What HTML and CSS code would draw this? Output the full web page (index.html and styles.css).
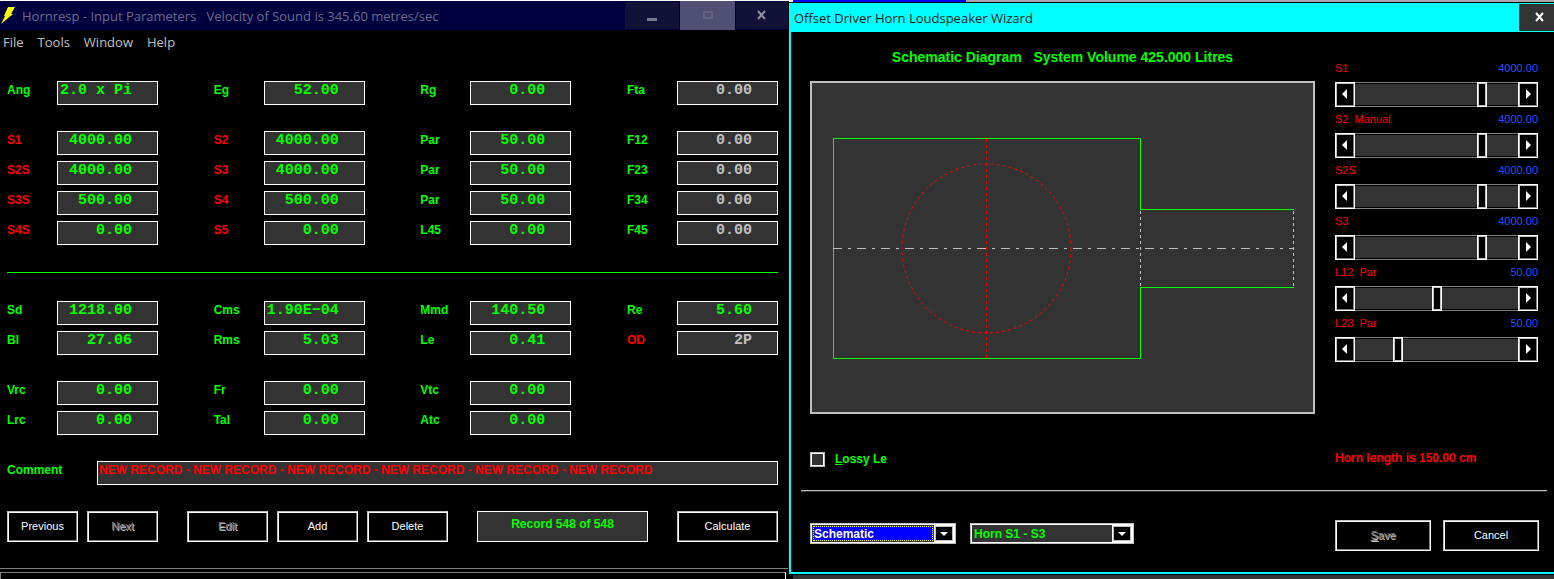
FILE: index.html
```
<!DOCTYPE html>
<html lang="en">
<head>
    <meta charset="UTF-8">
    <meta name="viewport" content="width=device-width, initial-scale=1.0">
    <title>Hornresp - Input Parameters</title>
    <link rel="stylesheet" href="styles.css">
</head>
<body>
    <div class="desktop">
        <!-- Main window -->
        <main class="main-window">
            <header class="titlebar">
                <svg class="bolt" width="14" height="18" viewBox="0 0 14 18"><path d="M7 0h7l-4 7h2L0 17l4-8H3z" fill="#ff0"/></svg>
                <h1 class="title">Hornresp - Input Parameters   Velocity of Sound is 345.60 metres/sec</h1>
                <button class="win-btn" type="button" aria-label="Minimize"><svg width="10" height="12"><path d="M0 8h10v3H0z" fill="#777790"/></svg></button>
                <button class="win-btn win-max" type="button" aria-label="Maximize"><svg width="10" height="10"><path d="M1 1h8v6H1z" fill="none" stroke="#62627e" stroke-width="2"/></svg></button>
                <button class="win-btn win-close" type="button" aria-label="Close"><svg width="10" height="10" viewBox="0 0 10 10"><path d="M1 1l7 8M8 1L1 9" stroke="#9090a0" stroke-width="2"/></svg></button>
            </header>
            <nav class="menu">
                <a href="#">File</a>
                <a href="#">Tools</a>
                <a href="#">Window</a>
                <a href="#">Help</a>
            </nav>

            <form class="params">
                <div class="fields">
                    <div class="field"><label for="ang">Ang</label><input class="left" id="ang" type="text" value="2.0 x Pi"></div>
                    <div class="field"><label for="eg">Eg</label><input id="eg" type="text" value="52.00"></div>
                    <div class="field"><label for="rg">Rg</label><input id="rg" type="text" value="0.00"></div>
                    <div class="field"><label for="fta">Fta</label><input class="grey" id="fta" type="text" value="0.00"></div>
                </div>

                <div class="fields">
                    <div class="field"><label class="red" for="s1">S1</label><input id="s1" type="text" value="4000.00"></div>
                    <div class="field"><label class="red" for="s2">S2</label><input id="s2" type="text" value="4000.00"></div>
                    <div class="field"><label for="par1">Par</label><input id="par1" type="text" value="50.00"></div>
                    <div class="field"><label for="f12">F12</label><input class="grey" id="f12" type="text" value="0.00"></div>

                    <div class="field"><label class="red" for="s2s">S2S</label><input id="s2s" type="text" value="4000.00"></div>
                    <div class="field"><label class="red" for="s3">S3</label><input id="s3" type="text" value="4000.00"></div>
                    <div class="field"><label for="par2">Par</label><input id="par2" type="text" value="50.00"></div>
                    <div class="field"><label for="f23">F23</label><input class="grey" id="f23" type="text" value="0.00"></div>

                    <div class="field"><label class="red" for="s3s">S3S</label><input id="s3s" type="text" value="500.00"></div>
                    <div class="field"><label class="red" for="s4">S4</label><input id="s4" type="text" value="500.00"></div>
                    <div class="field"><label for="par3">Par</label><input id="par3" type="text" value="50.00"></div>
                    <div class="field"><label for="f34">F34</label><input class="grey" id="f34" type="text" value="0.00"></div>

                    <div class="field"><label class="red" for="s4s">S4S</label><input id="s4s" type="text" value="0.00"></div>
                    <div class="field"><label class="red" for="s5">S5</label><input id="s5" type="text" value="0.00"></div>
                    <div class="field"><label for="l45">L45</label><input id="l45" type="text" value="0.00"></div>
                    <div class="field"><label for="f45">F45</label><input class="grey" id="f45" type="text" value="0.00"></div>
                </div>

                <hr class="green-line">

                <div class="fields">
                    <div class="field"><label for="sd">Sd</label><input id="sd" type="text" value="1218.00"></div>
                    <div class="field"><label for="cms">Cms</label><input id="cms" type="text" value="1.90E−04"></div>
                    <div class="field"><label for="mmd">Mmd</label><input id="mmd" type="text" value="140.50"></div>
                    <div class="field"><label for="re">Re</label><input id="re" type="text" value="5.60"></div>

                    <div class="field"><label for="bl">Bl</label><input id="bl" type="text" value="27.06"></div>
                    <div class="field"><label for="rms">Rms</label><input id="rms" type="text" value="5.03"></div>
                    <div class="field"><label for="le">Le</label><input id="le" type="text" value="0.41"></div>
                    <div class="field"><label class="red" for="od">OD</label><input class="grey" id="od" type="text" value="2P"></div>
                </div>

                <div class="fields">
                    <div class="field"><label for="vrc">Vrc</label><input id="vrc" type="text" value="0.00"></div>
                    <div class="field"><label for="fr">Fr</label><input id="fr" type="text" value="0.00"></div>
                    <div class="field"><label for="vtc">Vtc</label><input id="vtc" type="text" value="0.00"></div>
                    <span></span>
                    <div class="field"><label for="lrc">Lrc</label><input id="lrc" type="text" value="0.00"></div>
                    <div class="field"><label for="tal">Tal</label><input id="tal" type="text" value="0.00"></div>
                    <div class="field"><label for="atc">Atc</label><input id="atc" type="text" value="0.00"></div>
                </div>

                <div class="field comment">
                    <label for="comment">Comment</label>
                    <input id="comment" type="text" value="NEW RECORD - NEW RECORD - NEW RECORD - NEW RECORD - NEW RECORD - NEW RECORD">
                </div>

                <div class="actions">
                    <div class="btn-group">
                        <button class="btn small" type="button">Previous</button>
                        <button class="btn small" type="button" disabled>Next</button>
                    </div>
                    <div class="btn-group">
                        <button class="btn" type="button" disabled>Edit</button>
                        <button class="btn" type="button">Add</button>
                        <button class="btn" type="button">Delete</button>
                    </div>
                    <output class="record">Record 548 of 548</output>
                    <button class="btn large" type="button">Calculate</button>
                </div>
            </form>

            <footer class="statusbar"><div class="status-panel"></div></footer>
        </main>

        <!-- Loudspeaker wizard -->
        <div class="wizard-side">
            <section class="wizard">
                <header class="wizard-title">
                    <h2 class="title">Offset Driver Horn Loudspeaker Wizard</h2>
                    <button class="wizard-close" type="button" aria-label="Close"><svg width="10" height="10" viewBox="0 0 10 10"><path d="M1 1l7 8M8 1L1 9" stroke="#fff" stroke-width="2"/></svg></button>
                </header>

                <div class="wizard-body">
                    <div class="preview">
                        <h3 class="diagram-title">Schematic Diagram   System Volume 425.000 Litres</h3>
                        <div class="diagram">
                            <svg viewBox="0 0 501 329" fill="none">
                                <path d="M328.500 126.500V55.500H21.500V275.500H328.500V204.500" stroke="#0f0"/>
                                <path d="M328 126.500H482M328 204.500H482" stroke="#0f0"/>
                                <path d="M328.500 128V204M481.500 128V204" stroke="#c0c0c0" stroke-dasharray="3 3"/>
                                <path d="M21 165.500H482" stroke="#c0c0c0" stroke-dasharray="9 6 3 6"/>
                                <path d="M174.500 56V275" stroke="#f00" stroke-dasharray="3 3"/>
                                <circle cx="174.500" cy="165.500" r="84.500" stroke="#f00" stroke-dasharray="3 3"/>
                            </svg>
                        </div>
                        <div class="lossy">
                            <input id="lossy" type="checkbox">
                            <label for="lossy"><u>L</u>ossy Le</label>
                        </div>
                    </div>

                    <div class="sliders">
                        <div class="slider">
                            <div class="slider-head"><label for="r1">S1</label><output>4000.00</output></div>
                            <div class="scroll">
                                <button type="button" aria-label="Less"><svg width="6" height="10"><path d="M5 0v10L0 5z" fill="#fff"/></svg></button>
                                <input id="r1" type="range" value="80">
                                <button type="button" aria-label="More"><svg width="6" height="10"><path d="M1 0v10l5-5z" fill="#fff"/></svg></button>
                            </div>
                        </div>
                        <div class="slider">
                            <div class="slider-head"><label for="r2">S2  Manual</label><output>4000.00</output></div>
                            <div class="scroll">
                                <button type="button" aria-label="Less"><svg width="6" height="10"><path d="M5 0v10L0 5z" fill="#fff"/></svg></button>
                                <input id="r2" type="range" value="80">
                                <button type="button" aria-label="More"><svg width="6" height="10"><path d="M1 0v10l5-5z" fill="#fff"/></svg></button>
                            </div>
                        </div>
                        <div class="slider">
                            <div class="slider-head"><label for="r3">S2S</label><output>4000.00</output></div>
                            <div class="scroll">
                                <button type="button" aria-label="Less"><svg width="6" height="10"><path d="M5 0v10L0 5z" fill="#fff"/></svg></button>
                                <input id="r3" type="range" value="80">
                                <button type="button" aria-label="More"><svg width="6" height="10"><path d="M1 0v10l5-5z" fill="#fff"/></svg></button>
                            </div>
                        </div>
                        <div class="slider">
                            <div class="slider-head"><label for="r4">S3</label><output>4000.00</output></div>
                            <div class="scroll">
                                <button type="button" aria-label="Less"><svg width="6" height="10"><path d="M5 0v10L0 5z" fill="#fff"/></svg></button>
                                <input id="r4" type="range" value="80">
                                <button type="button" aria-label="More"><svg width="6" height="10"><path d="M1 0v10l5-5z" fill="#fff"/></svg></button>
                            </div>
                        </div>
                        <div class="slider">
                            <div class="slider-head"><label for="r5">L12  Par</label><output>50.00</output></div>
                            <div class="scroll">
                                <button type="button" aria-label="Less"><svg width="6" height="10"><path d="M5 0v10L0 5z" fill="#fff"/></svg></button>
                                <input id="r5" type="range" value="50">
                                <button type="button" aria-label="More"><svg width="6" height="10"><path d="M1 0v10l5-5z" fill="#fff"/></svg></button>
                            </div>
                        </div>
                        <div class="slider">
                            <div class="slider-head"><label for="r6">L23  Par</label><output>50.00</output></div>
                            <div class="scroll">
                                <button type="button" aria-label="Less"><svg width="6" height="10"><path d="M5 0v10L0 5z" fill="#fff"/></svg></button>
                                <input id="r6" type="range" value="25">
                                <button type="button" aria-label="More"><svg width="6" height="10"><path d="M1 0v10l5-5z" fill="#fff"/></svg></button>
                            </div>
                        </div>
                        <p class="length">Horn length is 150.00 cm</p>
                    </div>
                </div>

                <hr class="grey-line">

                <div class="wizard-footer">
                    <div class="combo active">
                        <select aria-label="View"><option>Schematic</option></select>
                        <span class="combo-arrow"><svg width="8" height="4"><path d="M0 0h8L4 4z" fill="#fff"/></svg></span>
                    </div>
                    <div class="combo wide">
                        <select aria-label="Segment"><option>Horn S1 - S3</option></select>
                        <span class="combo-arrow"><svg width="8" height="4"><path d="M0 0h8L4 4z" fill="#fff"/></svg></span>
                    </div>
                    <div class="dialog-btns">
                        <button class="btn medium" type="button" disabled><u>S</u>ave</button>
                        <button class="btn medium" type="button">Cancel</button>
                    </div>
                </div>
            </section>
            <div class="behind"></div>
        </div>
    </div>
</body>
</html>
```
FILE: styles.css
```
* {
    box-sizing: border-box;
}
body {
    margin: 0;
    background-color: #000;
    font-family: "Liberation Sans", Arial, sans-serif;
    font-size: 12px;
}
h1, h2, h3, p {
    margin: 0;
}
button {
    padding: 0;
    font-family: inherit;
}
svg {
    display: block;
}
.desktop {
    display: grid;
    grid-template-columns: 789fr 765fr;
    min-height: 100vh;
}

/* Main window */
.main-window {
    display: flex;
    flex-direction: column;
    border-top: 1px solid #fff;
}
.titlebar {
    display: flex;
    align-items: center;
    height: 29px;
    margin-right: 1px;
    padding-left: 1px;
    background-color: #000040;
    color: #6c6c8c;
}
.title {
    flex: 1;
    font: 13px/28px "Open Sans", "Noto Sans", sans-serif;
    white-space: pre;
}
.bolt {
    margin-right: 7px;
}
.win-btn {
    display: flex;
    align-items: center;
    justify-content: center;
    width: 54px;
    height: 27px;
    border: none;
    background-color: #121238;
}
.win-max {
    width: 55px;
    height: 29px;
    background-color: #505075;
    margin: 0 1px;
}
.win-close {
    width: 52px;
    padding-bottom: 2px;
}
.menu {
    display: flex;
    gap: 14px;
    padding: 2px 3px;
    height: 26px;
    font: 13px/20px "Open Sans", "Noto Sans", sans-serif;
}
.menu a {
    color: #c0c0c0;
    text-decoration: none;
}
.params {
    display: flex;
    flex-direction: column;
    gap: 26px;
    padding: 25px 11px 0 7px;
}
.fields {
    display: grid;
    grid-template-columns: repeat(4, 151px);
    justify-content: space-between;
    row-gap: 6px;
}
.field {
    display: flex;
}
.field label {
    width: 50px;
    color: #0f0;
    font-weight: bold;
    line-height: 18px;
}
.field input {
    width: 101px;
    height: 24px;
    padding: 0 25px 6px 2px;
    border: 1px solid #fff;
    border-radius: 0;
    background-color: #333;
    color: #0f0;
    font: bold 15px "Liberation Mono", "Courier New", monospace;
    text-align: right;
}
.field input.left {
    text-align: left;
}
.field input.grey {
    color: #c0c0c0;
}
.field label.red {
    color: #f00;
}
.green-line {
    width: 100%;
    height: 1px;
    margin: 1px 0 2px;
    border: none;
    background-color: #0f0;
}
.field.comment label {
    width: 90px;
}
.field.comment input {
    flex: 1;
    padding: 0 1px 6px;
    color: #f00;
    font: bold 12px "Liberation Sans", Arial, sans-serif;
    text-align: left;
}
.actions {
    display: flex;
    justify-content: space-between;
}
.btn-group {
    display: flex;
    gap: 9px;
}
.btn {
    width: 81px;
    height: 31px;
    padding-bottom: 2px;
    border: 1px solid #fff;
    border-top-color: #c0c0c0;
    border-left-color: #c0c0c0;
    border-radius: 0;
    background-color: #000;
    box-shadow: inset 1px 1px #fff, inset -1px -1px #808080;
    color: #fff;
    font-size: 11px;
}
.btn:disabled {
    color: #808080;
    text-shadow: 1px 1px #c0c0c0;
}
.btn.small {
    width: 71px;
}
.btn.medium {
    width: 96px;
}
.btn.large {
    width: 101px;
}
.record {
    width: 171px;
    height: 31px;
    border: 1px solid #fff;
    background-color: #333;
    color: #0f0;
    font-weight: bold;
    line-height: 24px;
    text-align: center;
}
.statusbar {
    margin: auto 1px 0 0;
    padding: 3px 2px 0 0;
    border-top: 1px solid #808080;
}
.status-panel {
    height: 7px;
    border: 1px solid #808080;
    border-right-color: #fff;
    border-bottom: none;
}

/* Wizard */
.wizard-side {
    display: flex;
    flex-direction: column;
    border-top: 2px solid #a8a8a8;
    border-image: linear-gradient(to right, #fff 4px, #00f 4px 177px, #a8a8a8 177px) 2 0 0 0;
}
.wizard {
    flex: 1;
    display: flex;
    flex-direction: column;
    margin-top: 1px;
    border: 2px solid #0ff;
    border-width: 0 0 2px 2px;
}
.wizard-title {
    display: flex;
    align-items: center;
    height: 29px;
    padding-left: 3px;
    background-color: #0ff;
    color: #002020;
}
.wizard-close {
    display: flex;
    align-items: center;
    justify-content: center;
    width: 35px;
    height: 27px;
    padding: 0 0 2px 6px;
    border: none;
    background-color: #333;
}
.wizard-body {
    display: flex;
    gap: 20px;
    padding: 15px 16px 0 19px;
}
.preview {
    flex: 1;
}
.diagram-title {
    margin-bottom: 14px;
    color: #0f0;
    font-size: 14px;
    line-height: 20px;
    text-align: center;
    white-space: pre;
}
.diagram {
    border: 2px solid #c0c0c0;
    background-color: #333;
}
.diagram svg {
    width: 100%;
}
.lossy {
    display: flex;
    align-items: center;
    gap: 10px;
    margin-top: 36px;
    color: #0f0;
    font-weight: bold;
    line-height: 18px;
}
.lossy input {
    appearance: none;
    width: 15px;
    height: 15px;
    margin: 0;
    border: 1px solid #c0c0c0;
    background-color: #333;
    box-shadow: inset 0 0 0 1px #fff;
}
.sliders {
    display: flex;
    flex-direction: column;
    gap: 6px;
    width: 203px;
    padding-top: 15px;
}
.slider-head {
    display: flex;
    justify-content: space-between;
    height: 20px;
    color: #f00;
    font-size: 11px;
    line-height: 12px;
    white-space: pre;
}
.slider-head output {
    color: #2050ff;
}
.scroll {
    display: flex;
    height: 25px;
}
.scroll button {
    display: flex;
    align-items: center;
    justify-content: center;
    width: 20px;
    padding-bottom: 2px;
    border: 1px solid #fff;
    border-radius: 0;
    background-color: #000;
    box-shadow: inset 1px 1px #c0c0c0, inset -1px -1px #808080;
}
.scroll input {
    appearance: none;
    flex: 1;
    min-width: 0;
    height: 25px;
    margin: 0;
    border: none;
    background: linear-gradient(#808080 1px, #000 1px 2px, #333 2px 23px, #000 23px 24px, #808080 24px);
}
.scroll input::-webkit-slider-thumb {
    appearance: none;
    width: 10px;
    height: 25px;
    border: 1px solid #fff;
    background-color: #000;
    box-shadow: inset 0 0 0 1px #c0c0c0;
}
.length {
    margin-top: 81px;
    color: #f00;
    font-weight: bold;
    line-height: 18px;
}
.grey-line {
    height: 2px;
    margin: 22px 7px 28px 10px;
    border: none;
    border-top: 1px solid #c0c0c0;
    background-color: #333;
}
.wizard-footer {
    display: flex;
    align-items: flex-start;
    gap: 14px;
    padding: 0 15px 0 19px;
}
.combo {
    position: relative;
    width: 146px;
    height: 21px;
    margin-top: 3px;
    border: 1px solid #c0c0c0;
    background-color: #fff;
    padding: 1px;
}
.combo.wide {
    width: 164px;
}
.combo select {
    appearance: none;
    display: block;
    width: calc(100% - 20px);
    height: 17px;
    padding: 0 2px;
    border: none;
    border-radius: 0;
    background-color: #333;
    color: #0f0;
    font: bold 12px "Liberation Sans", Arial, sans-serif;
}
.combo.active select {
    border: 1px solid #333;
    outline: 1px dotted #ff0;
    outline-offset: -2px;
    background-color: #00f;
    color: #fff;
    padding: 0 1px;
}
.combo-arrow {
    position: absolute;
    top: 2px;
    right: 2px;
    display: flex;
    align-items: center;
    justify-content: center;
    width: 18px;
    height: 15px;
    border: 1px solid #c0c0c0;
    background-color: #000;
    pointer-events: none;
}
.dialog-btns {
    display: flex;
    gap: 12px;
    margin-left: auto;
}
.behind {
    height: 4px;
    margin: 1px 0 0 4px;
    background-color: #333;
}
```
